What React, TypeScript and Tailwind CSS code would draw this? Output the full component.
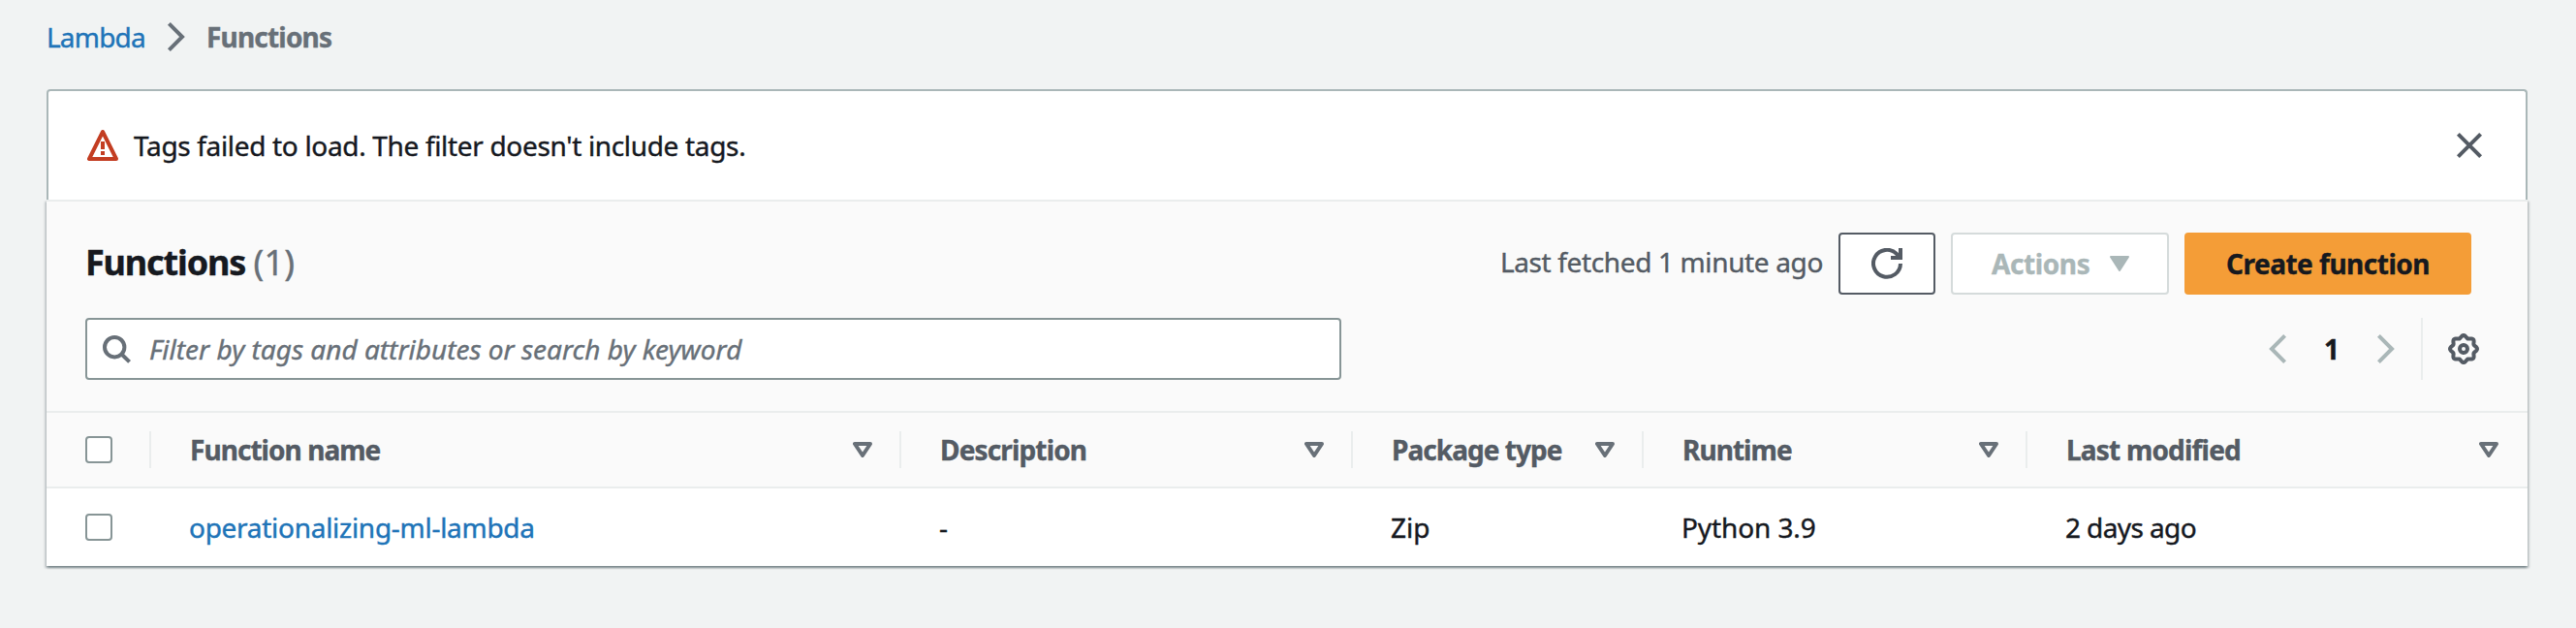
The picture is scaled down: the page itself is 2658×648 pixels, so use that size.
import type { ReactNode } from "react";

type Column = { label: string; value: ReactNode; labelClass: string; valueClass: string };

const columns: Column[] = [
  {
    label: "Function name",
    value: <a href="#" className="text-[#2074b8] tracking-[-0.28px]">operationalizing-ml-lambda</a>,
    labelClass: "tracking-[-0.95px]",
    valueClass: "",
  },
  { label: "Description", value: "-", labelClass: "tracking-[-0.85px]", valueClass: "" },
  { label: "Package type", value: "Zip", labelClass: "tracking-[-0.95px]", valueClass: "" },
  { label: "Runtime", value: "Python 3.9", labelClass: "tracking-[-0.95px]", valueClass: "tracking-[-0.1px]" },
  { label: "Last modified", value: "2 days ago", labelClass: "tracking-[-0.8px]", valueClass: "tracking-[-0.6px]" },
];

const rowGrid = "grid grid-cols-[108px_774px_466px_300px_396px_516px] items-center";

// Outline of an eight-toothed cog centred in a 32x32 box.
const cogPath =
  Array.from({ length: 96 }, (_, i) => {
    const a = (i / 96) * Math.PI * 2;
    const r = 12.7 + 1.3 * Math.cos(8 * a);
    return `${i ? "L" : "M"}${(16 + r * Math.cos(a)).toFixed(2)} ${(16 + r * Math.sin(a)).toFixed(2)}`;
  }).join("") + "Z";

function Chevron({ className, left = false }: { className: string; left?: boolean }) {
  return (
    <svg width="20" height="32" viewBox="0 0 20 32" fill="none" stroke="currentColor" strokeWidth="4" className={className}>
      <path d={left ? "M17.6 2.4 4 16l13.6 13.6" : "M2.4 2.4 16 16 2.4 29.6"} />
    </svg>
  );
}

function WarningIcon() {
  return (
    <svg width="32" height="32" viewBox="0 0 32 32" fill="none" stroke="#c33d22" className="shrink-0">
      <path d="M16 2 2 30h28Z" strokeWidth="4" strokeLinejoin="round" />
      <path d="M16 12v8M16 22v4" strokeWidth="4" />
    </svg>
  );
}

function CloseIcon() {
  return (
    <svg width="32" height="32" viewBox="0 0 32 32" fill="none" stroke="#545b64" strokeWidth="4">
      <path d="m4.4 4.4 23.2 23.2M27.6 4.4 4.4 27.6" />
    </svg>
  );
}

function RefreshIcon() {
  return (
    <svg width="32" height="32" viewBox="0 0 32 32" fill="none" stroke="#545b64" strokeWidth="4">
      <path d="M30 16a14 14 0 1 1-4-10l3 3.5" />
      <path d="M30 0v10H20" />
    </svg>
  );
}

function SearchIcon() {
  return (
    <svg width="32" height="32" viewBox="0 0 32 32" fill="none" stroke="#687078" strokeWidth="4">
      <circle cx="12.2" cy="14.2" r="10.2" />
      <path d="m19.2 21.2 8.4 8.2" />
    </svg>
  );
}

function GearIcon() {
  return (
    <svg width="32" height="32" viewBox="0 0 32 32" fill="none" stroke="#545b64" strokeWidth="4" strokeLinejoin="round">
      <path d={cogPath} />
      <circle cx="16" cy="16" r="4" />
    </svg>
  );
}

function SortIcon() {
  return (
    <svg width="20" height="16" viewBox="0 0 20 16" fill="none" stroke="#687078" strokeWidth="4" strokeLinejoin="round">
      <path d="M2 2h16l-8 12Z" />
    </svg>
  );
}

function Checkbox() {
  return <span role="checkbox" aria-checked="false" className="ml-10 block size-7 rounded-[4px] border-2 border-[#879596] bg-white" />;
}

export default function App() {
  return (
    <main className="h-[648px] w-[2658px] bg-[#f1f3f3] px-12 font-['Noto_Sans',sans-serif] text-[28px] leading-10 text-[#16191f] [-webkit-text-stroke:0.4px]">
      <nav className="flex h-[92px] items-start pt-[18px]">
        <a href="#" className="w-[124px] tracking-[-0.8px] text-[#2074b8]">Lambda</a>
        <Chevron className="mt-1 text-[#687078]" />
        <span className="ml-[21px] font-bold tracking-[-0.81px] text-[#687078]">Functions</span>
      </nav>

      <div className="w-[2560px]">
        <div className="flex h-[114px] items-center rounded-t-[4px] border-2 border-b-0 border-[#aab7b8] bg-white pl-10 pr-[42px]">
          <WarningIcon />
          <p className="ml-4 grow tracking-[-0.33px]">Tags failed to load. The filter doesn't include tags.</p>
          <button aria-label="Dismiss"><CloseIcon /></button>
        </div>

        <section className="h-[378px] border-t-2 border-[#eaeded] bg-white shadow-[0_2px_2px_0_rgba(0,28,36,0.3),2px_2px_2px_0_rgba(0,28,36,0.15),-2px_2px_2px_0_rgba(0,28,36,0.15)]">
          <header className="h-[218px] border-b-2 border-[#eaeded] bg-[#fafafa] pl-10 pt-8">
            <div className="flex h-16 items-center pr-[58px]">
              <h1 className="mb-0.5 grow text-[36px] font-bold leading-[44px] tracking-[-1.15px]">
                Functions <span className="font-normal tracking-[0.3px] text-[#687078]">(1)</span>
              </h1>
              <span className="mb-1 mr-4 tracking-[-0.36px] text-[#545b64]">Last fetched 1 minute ago</span>
              <button aria-label="Refresh" className="flex h-16 w-[100px] items-center justify-center rounded-[4px] border-2 border-[#545b64] bg-white">
                <RefreshIcon />
              </button>
              <button className="ml-4 flex h-16 w-[225px] items-center rounded-[4px] border-2 border-[#d5dbdb] bg-white pl-10 font-bold tracking-[-0.4px] text-[#aab7b8]">
                Actions
                <svg width="20" height="16" viewBox="0 0 20 16" fill="currentColor" stroke="currentColor" strokeWidth="2" strokeLinejoin="round" className="ml-[21px]">
                  <path d="M1 1h18l-9 14Z" />
                </svg>
              </button>
              <button className="ml-4 h-16 w-[296px] rounded-[4px] bg-[#f49d37] font-bold tracking-[-0.5px]">Create function</button>
            </div>

            <div className="mt-6 flex h-16 items-center pr-[50px]">
              <div className="flex h-16 w-[1296px] items-center rounded-[4px] border-2 border-[#879596] bg-white pl-4">
                <SearchIcon />
                <span className="ml-4 italic text-[#687078]">Filter by tags and attributes or search by keyword</span>
              </div>
              <div className="ml-auto flex h-16 items-center">
                <Chevron left className="text-[#aab7b8]" />
                <span className="w-[92px] text-center font-bold">1</span>
                <Chevron className="text-[#aab7b8]" />
                <span className="ml-[26px] mr-[26px] h-16 w-0.5 bg-[#eaeded]" />
                <GearIcon />
              </div>
            </div>
          </header>

          <div className={`${rowGrid} h-[78px] border-b-2 border-[#eaeded] bg-[#fafafa]`}>
            <div className="flex items-center justify-between">
              <Checkbox />
              <span className="h-[38px] w-0.5 bg-[#eaeded]" />
            </div>
            {columns.map((c, i) => (
              <div key={c.label} className="flex items-center pl-10">
                <span className={`grow whitespace-nowrap font-bold text-[#545b64] ${c.labelClass}`}>{c.label}</span>
                <SortIcon />
                <span className={i < columns.length - 1 ? "ml-7 h-[38px] w-0.5 bg-[#eaeded]" : "ml-[30px]"} />
              </div>
            ))}
          </div>

          <div className={`${rowGrid} h-20`}>
            <Checkbox />
            {columns.map((c) => (
              <div key={c.label} className={`pl-[39px] ${c.valueClass}`}>{c.value}</div>
            ))}
          </div>
        </section>
      </div>
    </main>
  );
}
